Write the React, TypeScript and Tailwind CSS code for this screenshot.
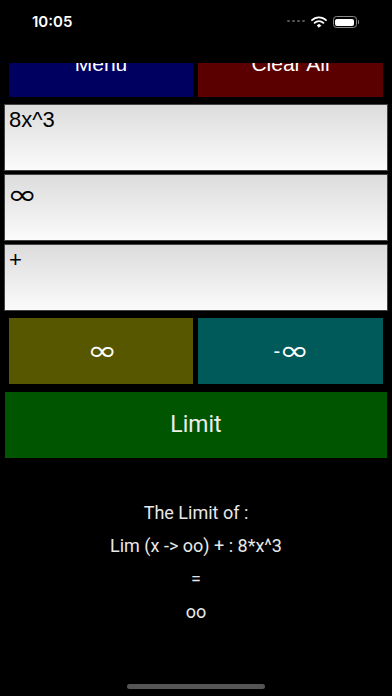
import React from "react";

const inputClass =
  "h-[67px] w-full border border-[#444] bg-gradient-to-b from-[#dcdcdc] to-[#fbfbfb] px-[4px] pt-[2px] text-[22px] leading-[26px] text-black";

// wide infinity sign like the iOS system font
function Inf({ className = "" }: { className?: string }) {
  return (
    <span
      className={`inline-block origin-left scale-x-[1.35] text-[27px] leading-[20px] [font-family:'DejaVu_Sans',sans-serif] ${className}`}
    >
      ∞
    </span>
  );
}

function StatusBar() {
  return (
    <div className="flex h-[63px] shrink-0 items-start justify-between px-[32px] pt-[13px]">
      <span className="text-[15px] font-semibold leading-[18px] text-white [font-family:Inter,sans-serif]">
        10:05
      </span>
      <div className="mt-[3px] flex items-center gap-[6px] pr-[1px]">
        <div className="flex items-end gap-[2px] pb-[2px]">
          <span className="h-[2px] w-[3px] rounded-full bg-[#555]" />
          <span className="h-[2px] w-[3px] rounded-full bg-[#555]" />
          <span className="h-[2px] w-[3px] rounded-full bg-[#555]" />
          <span className="h-[2px] w-[3px] rounded-full bg-[#555]" />
        </div>
        <svg width="16" height="12" viewBox="0 0 16 12" fill="none">
          <path d="M1 4.2a10 10 0 0 1 14 0" stroke="white" strokeWidth="1.8" strokeLinecap="round" />
          <path d="M3.6 6.9a6.2 6.2 0 0 1 8.8 0" stroke="white" strokeWidth="1.8" strokeLinecap="round" />
          <path d="M6.2 9.5a2.5 2.5 0 0 1 3.6 0L8 11.3z" fill="white" stroke="white" strokeWidth="1" strokeLinejoin="round" />
        </svg>
        <div className="flex items-center gap-[1px]">
          <div className="flex h-[12px] w-[24px] items-center rounded-[3.5px] border border-[#888] p-[1.5px]">
            <div className="h-full w-full rounded-[2px] bg-white" />
          </div>
          <span className="h-[4px] w-[1.5px] rounded-r-sm bg-[#888]" />
        </div>
      </div>
    </div>
  );
}

export default function App() {
  return (
    <main className="flex h-[696px] w-[392px] flex-col overflow-hidden bg-black [font-family:'Liberation_Sans',Arial,sans-serif]">
      <StatusBar />

      <div className="flex-1 overflow-hidden">
        <div className="-mt-[32px] flex flex-col">
          <div className="flex gap-[5px] pl-[9px] pr-[9px]">
            <button className="flex h-[66px] w-[184px] items-center justify-center bg-[#000060] text-[21px] text-white">
              Menu
            </button>
            <button className="flex h-[66px] w-[185px] items-center justify-center bg-[#5a0000] text-[21px] text-white">
              Clear All
            </button>
          </div>

          <div className="mt-[7px] flex flex-col gap-[3px] pl-[4px] pr-[4px]">
            <div className={inputClass}>8x^3</div>
            <div className={`${inputClass} pt-[9px]`}>
              <Inf className="-ml-[2px]" />
            </div>
            <div className={inputClass}>+</div>
          </div>

          <div className="mt-[7px] flex gap-[5px] pl-[9px] pr-[9px]">
            <button className="flex h-[66px] w-[184px] items-center justify-center bg-[#575700] pr-[6px] text-[20px] text-white">
              <Inf />
            </button>
            <button className="flex h-[66px] w-[185px] items-center justify-center bg-[#005a5a] pr-[6px] text-[20px] text-white">
              -<Inf className="-ml-[1px]" />
            </button>
          </div>

          <div className="mt-[8px] pl-[5px] pr-[5px]">
            <button className="flex h-[66px] w-full items-center justify-center bg-[#005500] text-[23px] text-[#eee] [font-family:Roboto,sans-serif]">
              Limit
            </button>
          </div>

          <div className="mt-[44px] flex flex-col items-center gap-[11px] text-[18px] leading-[22px] text-[#e8e8e8] [font-family:Roboto,sans-serif]">
            <p>The Limit of :</p>
            <p>Lim (x -&gt; oo) + : 8*x^3</p>
            <p>=</p>
            <p>oo</p>
          </div>
        </div>
      </div>

      <div className="flex h-[12px] shrink-0 justify-center">
        <div className="h-[5px] w-[138px] rounded-full bg-[#555]" />
      </div>
    </main>
  );
}
